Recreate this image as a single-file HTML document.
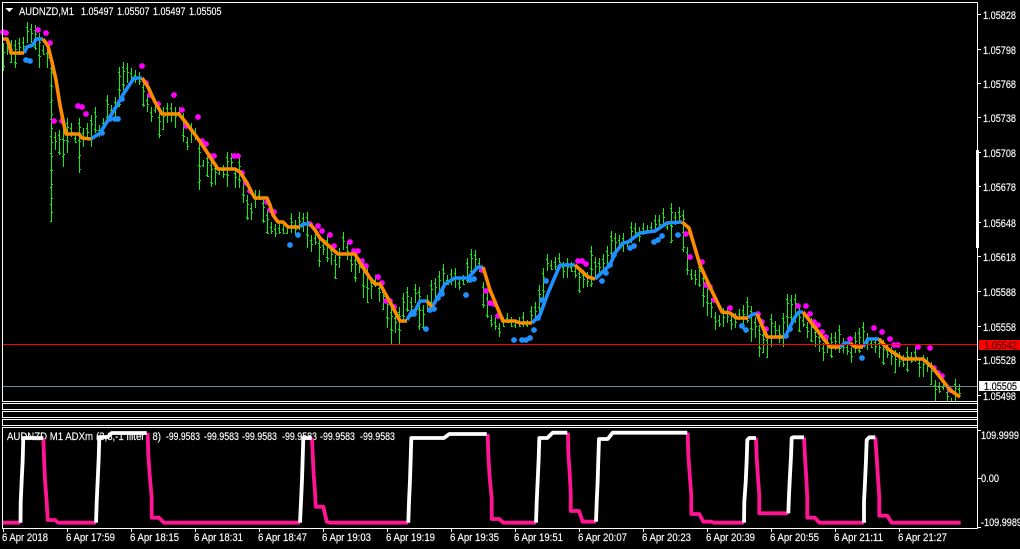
<!DOCTYPE html>
<html><head><meta charset="utf-8"><style>
html,body{margin:0;padding:0;background:#000;width:1020px;height:549px;overflow:hidden}
svg{display:block}
text{font-family:"Liberation Sans",sans-serif;font-size:11px;fill:#fff;stroke:#fff;stroke-width:.15px}
</style></head><body>
<svg width="1020" height="549" viewBox="0 0 1020 549">
<defs><path id="b" fill="none" d="M3.5 43V71M7.5 38V55M11.5 40V63M15.5 40V68M19.5 38V55M23.5 37V53M27.5 22V43M31.5 24V43M35.5 25V50M39.5 33V68M43.5 45V55M47.5 48V68M51.5 63V222M55.5 132V150M59.5 130V155M63.5 117V167M67.5 118V153M71.5 123V137M75.5 133V143M79.5 118V173M83.5 128V147M87.5 123V140M91.5 115V147M95.5 107V133M99.5 125V137M103.5 118V130M107.5 95V123M111.5 105V120M115.5 97V117M119.5 67V107M123.5 62V90M127.5 63V83M131.5 68V80M135.5 70V83M139.5 72V85M143.5 82V107M147.5 95V112M151.5 107V122M155.5 105V113M159.5 112V138M163.5 107V130M167.5 103V123M171.5 103V122M175.5 107V128M179.5 107V115M183.5 113V142M187.5 137V150M191.5 123V143M195.5 128V140M199.5 143V190M203.5 160V167M207.5 153V177M211.5 160V187M215.5 163V185M219.5 168V175M223.5 165V178M227.5 152V187M231.5 153V170M235.5 168V188M239.5 157V188M243.5 172V203M247.5 195V220M251.5 203V220M255.5 190V208M259.5 190V200M263.5 198V223M267.5 210V234M271.5 222V234M275.5 224V237M279.5 223V234M283.5 224V234M287.5 228V234M291.5 213V233M295.5 220V235M299.5 212V230M303.5 213V232M307.5 212V248M311.5 235V252M315.5 233V245M319.5 238V267M323.5 240V255M327.5 235V262M331.5 245V265M335.5 255V279M339.5 248V268M343.5 232V250M347.5 242V260M351.5 255V272M355.5 255V282M359.5 258V273M363.5 263V298M367.5 265V303M371.5 277V299M375.5 275V287M379.5 283V302M383.5 287V310M387.5 295V328M391.5 307V344M395.5 313V333M399.5 307V345M403.5 293V320M407.5 287V312M411.5 297V317M415.5 284V303M419.5 287V330M423.5 305V330M427.5 295V312M431.5 280V305M435.5 278V298M439.5 271V295M443.5 264V292M447.5 275V285M451.5 269V285M455.5 268V288M459.5 278V290M463.5 275V285M467.5 258V283M471.5 249V275M475.5 250V268M479.5 258V272M483.5 282V308M487.5 293V318M491.5 315V327M495.5 317V330M499.5 323V337M503.5 317V327M507.5 313V323M511.5 317V327M515.5 320V328M519.5 317V327M523.5 312V327M527.5 320V327M531.5 306V322M535.5 302V320M539.5 285V313M543.5 268V300M547.5 254V271M551.5 260V270M555.5 257V270M559.5 253V263M563.5 262V278M567.5 258V278M571.5 262V272M575.5 266V278M579.5 268V293M583.5 270V288M587.5 272V287M591.5 246V287M595.5 257V277M599.5 258V273M603.5 254V272M607.5 246V267M611.5 231V260M615.5 233V255M619.5 235V250M623.5 233V252M627.5 242V247M631.5 222V243M635.5 223V237M639.5 227V242M643.5 223V235M647.5 225V233M651.5 222V233M655.5 215V230M659.5 215V228M663.5 208V225M667.5 222V230M671.5 203V243M675.5 212V225M679.5 207V223M683.5 210V252M687.5 247V275M691.5 269V280M695.5 270V285M699.5 262V287M703.5 273V307M707.5 280V316M711.5 298V318M715.5 312V330M719.5 315V327M723.5 308V327M727.5 307V323M731.5 315V330M735.5 313V328M739.5 309V320M743.5 305V330M747.5 297V323M751.5 306V342M755.5 317V338M759.5 325V357M763.5 330V353M767.5 335V358M771.5 314V347M775.5 321V337M779.5 325V343M783.5 313V347M787.5 294V333M791.5 295V322M795.5 294V323M799.5 308V332M803.5 315V327M807.5 322V338M811.5 318V342M815.5 327V347M819.5 332V352M823.5 343V361M827.5 338V353M831.5 333V358M835.5 332V350M839.5 325V353M843.5 338V353M847.5 342V355M851.5 347V363M855.5 332V353M859.5 328V353M863.5 322V347M867.5 333V350M871.5 338V348M875.5 337V353M879.5 338V358M883.5 340V365M887.5 345V358M891.5 347V365M895.5 350V373M899.5 352V367M903.5 355V367M907.5 347V372M911.5 352V363M915.5 347V362M919.5 358V377M923.5 355V377M927.5 357V372M931.5 362V385M935.5 380V401M939.5 382V393M943.5 382V390M947.5 387V401M951.5 398V401M955.5 379V401M959.5 384V397"/></defs>
<rect width="1020" height="549" fill="#000"/>
<g stroke="#11ee11" stroke-width="1">
<use href="#b"/>
<use href="#b" x="-1" stroke-dasharray="1 16" stroke-dashoffset="-5"/>
<use href="#b" x="1" stroke-dasharray="1 13" stroke-dashoffset="-9"/>
</g>
<path fill="none" stroke="#ff00ff" stroke-width="5.8" stroke-linecap="round" d="M3 32h.01M6 33h.01M38 30h.01M46 33h.01M50 43h.01M54 121h.01M62 121h.01M78 106h.01M82 107h.01M86 114h.01M142 66h.01M146 83h.01M150 95h.01M158 104h.01M174 95h.01M182 110h.01M186 126h.01M198 117h.01M202 141h.01M206 144h.01M210 156h.01M214 156h.01M234 156h.01M238 156h.01M242 173h.01M246 183h.01M250 191h.01M267 202h.01M270 210h.01M274 212h.01M310 224h.01M318 226h.01M322 231h.01M330 235h.01M334 246h.01M350 242h.01M354 251h.01M358 251h.01M362 261h.01M366 266h.01M378 277h.01M382 283h.01M386 301h.01M390 301h.01M394 307h.01M482 270h.01M486 291h.01M490 303h.01M494 304h.01M498 316h.01M578 261h.01M582 261h.01M586 264h.01M686 234h.01M690 257h.01M702 262h.01M706 285h.01M710 287h.01M714 300h.01M730 308h.01M758 314h.01M762 322h.01M766 329h.01M798 306h.01M806 306h.01M810 314h.01M814 322h.01M818 325h.01M822 332h.01M826 337h.01M850 339h.01M874 328h.01M882 332h.01M890 339h.01M894 345h.01M898 345h.01M918 347h.01M930 348h.01M934 368h.01M938 373h.01M942 376h.01M950 390h.01"/>
<path fill="none" stroke="#1e90ff" stroke-width="5.8" stroke-linecap="round" d="M26 60h.01M30 61h.01M102 133h.01M110 119h.01M115 119h.01M118 119h.01M122 99h.01M290 245h.01M298 235h.01M414 314h.01M426 329h.01M430 310h.01M434 309h.01M438 298h.01M442 294h.01M466 295h.01M470 280h.01M474 279h.01M514 340h.01M522 340h.01M526 340h.01M530 338h.01M534 330h.01M538 318h.01M542 300h.01M546 281h.01M602 281h.01M606 273h.01M610 265h.01M614 255h.01M630 248h.01M634 246h.01M654 242h.01M658 240h.01M662 236h.01M678 235h.01M742 326h.01M746 330h.01M786 336h.01M790 329h.01M862 358h.01"/>
<path fill="none" stroke="#1e90ff" stroke-width="3.6" stroke-linejoin="round" d="M24 53L27 47L33 45L36 39L43 39M91 139L100 133L108 120L116 107L124 93L134 78L142 78M300 227L303 224L310 224M407 320L412 311L415 311L420 301L427 301M432 307L438 297L445 284L455 278L468 278L478 267L483 267M532 323L540 315L548 293L560 265L575 265M595 279L610 265L615 253L623 243L628 242L640 233L655 231L667 223L682 222M748 318L753 314L757 314M783 337L786 335L795 317L799 312L803 312M840 347L845 343L850 343M863 347L868 339L879 339"/>
<path fill="none" stroke="#ff8c00" stroke-width="3.6" stroke-linejoin="round" d="M3 39L7 39L9 44L11 53L24 53M43 39L48 46L52 62L56 80L60 105L63 120L66 134L79 134L82 138L91 139M142 78L148 87L155 102L162 114L179 114L187 124L196 136L205 149L212 160L218 169L235 169L240 172L247 183L252 193L255 198L267 198L270 205L273 215L278 222L283 222L288 227L300 227M310 224L315 230L320 238L330 247L338 254L355 254L360 263L370 278L375 284L380 284L390 302L400 321L407 321M427 301L432 307M483 267L490 290L503 321L515 321L520 323L532 323M575 265L588 277L595 279M682 222L689 228L700 265L710 287L722 312L730 313L737 318L748 318M757 314L767 337L783 337M803 312L830 347L840 347M850 343L855 347L863 347M879 339L888 349L903 359L923 359L933 368L950 390L960 397"/>
<g shape-rendering="crispEdges">
<rect x="2" y="344" width="975" height="1" fill="#ff0000"/>
<rect x="2" y="386" width="975" height="1" fill="#778899"/>
<g fill="none" stroke="#fff" stroke-width="1">
<path d="M977.5 2.5H2.5V401.5H977.5M2.5 403.5H977.5V409.5H2.5ZM2.5 411.5H977.5V417.5H2.5ZM2.5 419.5H977.5V425.5H2.5ZM2.5 427.5H977.5V528.5H2.5ZM977.5 2.5V528.5"/>
<path d="M978 14.5h3M978 49.5h3M978 83.5h3M978 117.5h3M978 152.5h3M978 186.5h3M978 222.5h3M978 256.5h3M978 291.5h3M978 326.5h3M978 359.5h3M978 395.5h3M978 430.5h3M978 478.5h3M978 527.5h3"/>
<path d="M3.5 529v3M67.5 529v3M131.5 529v3M195.5 529v3M259.5 529v3M323.5 529v3M387.5 529v3M451.5 529v3M515.5 529v3M579.5 529v3M643.5 529v3M707.5 529v3M771.5 529v3M835.5 529v3M899.5 529v3"/>
</g>
<rect x="976" y="150" width="3" height="98" fill="#fff"/>
<rect x="979" y="340" width="41" height="10" fill="#ff0000"/>
<rect x="979" y="381" width="41" height="10" fill="#fff"/>
<path d="M5 8h8l-4 4z" fill="#fff"/>
</g>
<text x="19" y="15" textLength="55" lengthAdjust="spacingAndGlyphs">AUDNZD,M1</text>
<text x="81" y="15" textLength="32.5" lengthAdjust="spacingAndGlyphs">1.05497</text>
<text x="117" y="15" textLength="32.5" lengthAdjust="spacingAndGlyphs">1.05507</text>
<text x="153" y="15" textLength="32.5" lengthAdjust="spacingAndGlyphs">1.05497</text>
<text x="189" y="15" textLength="32.5" lengthAdjust="spacingAndGlyphs">1.05505</text>
<g>
<text x="983" y="19" textLength="33" lengthAdjust="spacingAndGlyphs">1.05828</text>
<text x="983" y="54" textLength="33" lengthAdjust="spacingAndGlyphs">1.05798</text>
<text x="983" y="88" textLength="33" lengthAdjust="spacingAndGlyphs">1.05768</text>
<text x="983" y="122" textLength="33" lengthAdjust="spacingAndGlyphs">1.05738</text>
<text x="983" y="157" textLength="33" lengthAdjust="spacingAndGlyphs">1.05708</text>
<text x="983" y="191" textLength="33" lengthAdjust="spacingAndGlyphs">1.05678</text>
<text x="983" y="227" textLength="33" lengthAdjust="spacingAndGlyphs">1.05648</text>
<text x="983" y="261" textLength="33" lengthAdjust="spacingAndGlyphs">1.05618</text>
<text x="983" y="296" textLength="33" lengthAdjust="spacingAndGlyphs">1.05588</text>
<text x="983" y="331" textLength="33" lengthAdjust="spacingAndGlyphs">1.05558</text>
<text x="983" y="364" textLength="33" lengthAdjust="spacingAndGlyphs">1.05528</text>
<text x="983" y="400" textLength="33" lengthAdjust="spacingAndGlyphs">1.05498</text>
<text x="984" y="349" textLength="33" lengthAdjust="spacingAndGlyphs" style="fill:#4a0000;stroke:#4a0000">1.05542</text>
<text x="984" y="390" textLength="33" lengthAdjust="spacingAndGlyphs" style="fill:#000;stroke:#000">1.05505</text>
<text x="981" y="439" textLength="38" lengthAdjust="spacingAndGlyphs">109.9999</text>
<text x="981" y="482" textLength="18" lengthAdjust="spacingAndGlyphs">0.00</text>
<text x="981" y="526" textLength="41" lengthAdjust="spacingAndGlyphs">-109.9989</text>
</g>
<text x="7" y="440" textLength="86" lengthAdjust="spacingAndGlyphs">AUDNZD M1 ADXm</text>
<text x="96" y="440" textLength="65" lengthAdjust="spacingAndGlyphs">(3,8,-1 filter : 8)</text>
<text x="166" y="440" textLength="34" lengthAdjust="spacingAndGlyphs">-99.9583</text>
<text x="204" y="440" textLength="35" lengthAdjust="spacingAndGlyphs">-99.9583</text>
<text x="242" y="440" textLength="35" lengthAdjust="spacingAndGlyphs">-99.9583</text>
<text x="282" y="440" textLength="35" lengthAdjust="spacingAndGlyphs">-99.9583</text>
<text x="320" y="440" textLength="35" lengthAdjust="spacingAndGlyphs">-99.9583</text>
<text x="360" y="440" textLength="35" lengthAdjust="spacingAndGlyphs">-99.9583</text>
<path fill="none" stroke="#ff1493" stroke-width="3.8" stroke-linejoin="round" d="M3 522.7L20.5 522.7M43.3 438L44 458L45 480L46.7 502L47.7 520L55 520L58 522.7L96 522.7M147.7 433L148.3 455L149.7 475L151.7 498L151.7 517.7L159 517.7L164 522.7L300 522.7M312 438L312.7 455L313.7 475L315 492L315.7 506.7L323.3 506.7L326.7 521.7L330 522.7L408.3 522.7M487.7 434L488.3 455L489.7 478L491.7 498L491.7 519L499.3 519L503.3 522.7L536 522.7M568 432.7L568.3 453L569.7 473L570.7 493L570.7 511L579 511L582.7 521.7L596 521.7M687.7 432.7L688.3 455L689.7 475L691.3 495L691.3 514L699.3 514L703.3 521.7L711.7 521.7L713.3 522.7L744 522.7M756 438L756.7 458L758 478L759.3 495L759.3 513.3L788.3 513.3M804 437.3L805 458L806.3 478L807.3 498L807.3 517.7L815 517.7L819.3 522.7L864 522.7M875.3 437.3L876.7 458L878 478L879.3 497L879.3 515.7L887.3 515.7L891.7 522.7L960.7 522.7"/>
<path fill="none" stroke="#fff" stroke-width="3.8" stroke-linejoin="round" d="M20.5 522.7L20.7 502L21.7 480L22.7 460L23.3 438L43.3 438M96 522.7L96.7 502L97.7 480L98.7 458L99.3 437L108 437L111.7 433L146.7 433M300 522.7L301 502L302 480L302.7 458L303.3 438L311.7 438M408.3 522.7L409 502L410 480L410.7 458L411.3 438L444 438L449.3 434L486.7 434M536 522.7L536.7 502L537.7 480L538.7 458L539.3 438L547.3 438L552.7 432.7L567.3 432.7M596 521.7L596.7 502L597.7 480L598.3 460L599 439L607.7 439L612.7 432.7L687.3 432.7M744 522.7L744.3 502L745.7 482L746.7 460L747.3 440L749.3 438L756 438M788.3 513.3L789 495L790 475L791 456.7L791.7 438L793.3 437.3L804 437.3M864 522.7L864 502L865 482L866 460L866.7 440L869.3 437.3L875.3 437.3"/>
<text x="2" y="541" textLength="46" lengthAdjust="spacingAndGlyphs">6 Apr 2018</text>
<text x="66" y="541" textLength="49" lengthAdjust="spacingAndGlyphs">6 Apr 17:59</text>
<text x="130" y="541" textLength="49" lengthAdjust="spacingAndGlyphs">6 Apr 18:15</text>
<text x="194" y="541" textLength="49" lengthAdjust="spacingAndGlyphs">6 Apr 18:31</text>
<text x="258" y="541" textLength="49" lengthAdjust="spacingAndGlyphs">6 Apr 18:47</text>
<text x="322" y="541" textLength="49" lengthAdjust="spacingAndGlyphs">6 Apr 19:03</text>
<text x="386" y="541" textLength="49" lengthAdjust="spacingAndGlyphs">6 Apr 19:19</text>
<text x="450" y="541" textLength="49" lengthAdjust="spacingAndGlyphs">6 Apr 19:35</text>
<text x="514" y="541" textLength="49" lengthAdjust="spacingAndGlyphs">6 Apr 19:51</text>
<text x="578" y="541" textLength="49" lengthAdjust="spacingAndGlyphs">6 Apr 20:07</text>
<text x="642" y="541" textLength="49" lengthAdjust="spacingAndGlyphs">6 Apr 20:23</text>
<text x="706" y="541" textLength="49" lengthAdjust="spacingAndGlyphs">6 Apr 20:39</text>
<text x="770" y="541" textLength="49" lengthAdjust="spacingAndGlyphs">6 Apr 20:55</text>
<text x="834" y="541" textLength="49" lengthAdjust="spacingAndGlyphs">6 Apr 21:11</text>
<text x="898" y="541" textLength="49" lengthAdjust="spacingAndGlyphs">6 Apr 21:27</text>
</svg>
</body></html>
